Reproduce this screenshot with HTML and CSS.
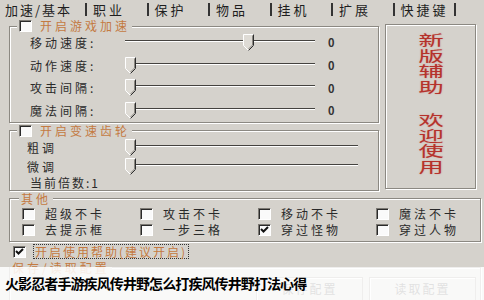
FILE: index.html
```html
<!DOCTYPE html>
<html lang="zh-CN">
<head>
    <meta charset="UTF-8">
    <meta name="viewport" content="width=device-width, initial-scale=1.0">
    <title>辅助设置</title>
    <link rel="stylesheet" href="styles.css">
</head>
<body>
<div class="app">
    <div class="tabs">
        <div class="tab active">加速/基本</div>
        <div class="tab">职业</div>
        <div class="tab">保护</div>
        <div class="tab">物品</div>
        <div class="tab">挂机</div>
        <div class="tab">扩展</div>
        <div class="tab">快捷键</div>
    </div>

    <div class="main">
        <div class="left">
            <fieldset class="group speed">
                <legend><span class="cb"></span><span class="legend-text">开启游戏加速</span></legend>
                <div class="rows">
                    <div class="row">
                        <span class="lbl">移动速度:</span>
                        <div class="slider">
                            <svg class="thumb" style="left:118px" width="11" height="17" viewBox="0 0 11 17"><path d="M0.5 0.5H10.5V11.5L5.5 16.5L0.5 11.5Z" fill="#dedbd5" stroke="#fff"/><path d="M10.5 0.5V11.5L5.5 16.5" fill="none" stroke="#2e2e2e"/><path d="M9.5 1.5V11L5.5 15" fill="none" stroke="#8a8780"/></svg>
                        </div>
                        <span class="val">0</span>
                    </div>
                    <div class="row">
                        <span class="lbl">动作速度:</span>
                        <div class="slider">
                            <svg class="thumb" style="left:0px" width="11" height="17" viewBox="0 0 11 17"><path d="M0.5 0.5H10.5V11.5L5.5 16.5L0.5 11.5Z" fill="#dedbd5" stroke="#fff"/><path d="M10.5 0.5V11.5L5.5 16.5" fill="none" stroke="#2e2e2e"/><path d="M9.5 1.5V11L5.5 15" fill="none" stroke="#8a8780"/></svg>
                        </div>
                        <span class="val">0</span>
                    </div>
                    <div class="row">
                        <span class="lbl">攻击间隔:</span>
                        <div class="slider">
                            <svg class="thumb" style="left:0px" width="11" height="17" viewBox="0 0 11 17"><path d="M0.5 0.5H10.5V11.5L5.5 16.5L0.5 11.5Z" fill="#dedbd5" stroke="#fff"/><path d="M10.5 0.5V11.5L5.5 16.5" fill="none" stroke="#2e2e2e"/><path d="M9.5 1.5V11L5.5 15" fill="none" stroke="#8a8780"/></svg>
                        </div>
                        <span class="val">0</span>
                    </div>
                    <div class="row">
                        <span class="lbl">魔法间隔:</span>
                        <div class="slider">
                            <svg class="thumb" style="left:0px" width="11" height="17" viewBox="0 0 11 17"><path d="M0.5 0.5H10.5V11.5L5.5 16.5L0.5 11.5Z" fill="#dedbd5" stroke="#fff"/><path d="M10.5 0.5V11.5L5.5 16.5" fill="none" stroke="#2e2e2e"/><path d="M9.5 1.5V11L5.5 15" fill="none" stroke="#8a8780"/></svg>
                        </div>
                        <span class="val">0</span>
                    </div>
                </div>
            </fieldset>

            <fieldset class="group gear">
                <legend><span class="cb"></span><span class="legend-text">开启变速齿轮</span></legend>
                <div class="rows">
                    <div class="row">
                        <span class="lbl">粗调</span>
                        <div class="slider wide">
                            <svg class="thumb" style="left:0px" width="11" height="17" viewBox="0 0 11 17"><path d="M0.5 0.5H10.5V11.5L5.5 16.5L0.5 11.5Z" fill="#dedbd5" stroke="#fff"/><path d="M10.5 0.5V11.5L5.5 16.5" fill="none" stroke="#2e2e2e"/><path d="M9.5 1.5V11L5.5 15" fill="none" stroke="#8a8780"/></svg>
                        </div>
                    </div>
                    <div class="row">
                        <span class="lbl">微调</span>
                        <div class="slider wide">
                            <svg class="thumb" style="left:0px" width="11" height="17" viewBox="0 0 11 17"><path d="M0.5 0.5H10.5V11.5L5.5 16.5L0.5 11.5Z" fill="#dedbd5" stroke="#fff"/><path d="M10.5 0.5V11.5L5.5 16.5" fill="none" stroke="#2e2e2e"/><path d="M9.5 1.5V11L5.5 15" fill="none" stroke="#8a8780"/></svg>
                        </div>
                    </div>
                    <div class="row short">
                        <span class="ratio">当前倍数:1</span>
                    </div>
                </div>
            </fieldset>
        </div>

        <div class="banner">
            <div class="banner-text">新<br>版<br>辅<br>助</div>
            <div class="banner-text">欢<br>迎<br>使<br>用</div>
        </div>
    </div>

    <fieldset class="group other">
        <legend><span class="legend-text">其他</span></legend>
        <div class="opts">
            <div class="opt"><span class="cb"></span>超级不卡</div>
            <div class="opt"><span class="cb"></span>攻击不卡</div>
            <div class="opt"><span class="cb"></span>移动不卡</div>
            <div class="opt"><span class="cb"></span>魔法不卡</div>
            <div class="opt"><span class="cb"></span>去提示框</div>
            <div class="opt"><span class="cb"></span>一步三格</div>
            <div class="opt"><span class="cb checked"><svg width="9" height="9" viewBox="0 0 9 9"><path d="M1 4L3.5 6.5L8 2" fill="none" stroke="#111" stroke-width="2"/></svg></span>穿过怪物</div>
            <div class="opt"><span class="cb"></span>穿过人物</div>
        </div>
    </fieldset>

    <div class="help">
        <span class="cb checked"><svg width="9" height="9" viewBox="0 0 9 9"><path d="M1 4L3.5 6.5L8 2" fill="none" stroke="#111" stroke-width="2"/></svg></span>
        <span class="help-text">开启使用帮助(建议开启)</span>
    </div>

    <fieldset class="group save">
        <legend><span class="legend-text">保存/读取配置</span></legend>
        <div class="buttons">
            <div class="btn">保存配置</div>
            <div class="btn">读取配置</div>
        </div>
    </fieldset>

    <div class="caption">火影忍者手游疾风传井野怎么打疾风传井野打法心得</div>
</div>
</body>
</html>
```

FILE: styles.css
```css
body {
    margin: 0;
    background-color: #d5d2cc;
    font-family: "Noto Sans CJK SC", sans-serif;
    font-size: 12px;
    color: #2a2a2a;
}
.app {
    position: relative;
    width: 484px;
    height: 300px;
    overflow: hidden;
}

/* tabs */
.tabs {
    display: flex;
    height: 18px;
    align-items: center;
    font-size: 13px;
    letter-spacing: 3px;
    color: #1e1e1e;
}
.tab {
    width: 61.5px;
    height: 13px;
    line-height: 13px;
    padding-left: 6px;
    box-sizing: border-box;
    border-right: 2px solid #333;
    white-space: nowrap;
}
.tab.active {
    width: 87px;
    padding-left: 5px;
    letter-spacing: 2px;
}

/* layout */
.main {
    display: flex;
    padding-left: 9px;
    margin-top: 1px;
}
.left {
    display: flex;
    flex-direction: column;
    width: 370px;
}

/* group boxes */
.group {
    margin: 0;
    padding: 0;
    border: 1px solid #8c8982;
    box-shadow: inset 1px 1px 0 #fff, 1px 1px 0 #fff;
    min-width: 0;
}
.group legend {
    display: flex;
    align-items: center;
    height: 14px;
    padding: 0 2px;
    margin-left: 7px;
    background-color: #d5d2cc;
}
.legend-text {
    color: #c47a42;
    letter-spacing: 3px;
    line-height: 14px;
    margin-left: 8px;
}
.other legend .legend-text,
.save legend .legend-text {
    margin-left: 0;
}

.rows {
    padding-left: 20px;
    margin-top: -2px;
}
.row {
    display: flex;
    align-items: center;
    height: 22.7px;
}
.lbl {
    width: 95px;
    letter-spacing: 3px;
}
.gear {
    margin-top: 1px;
}
.gear .rows {
    padding-left: 17px;
    margin-top: 0;
}
.gear .row {
    height: 19px;
}
.gear .lbl {
    width: 98px;
}
.gear .row.short {
    height: 14px;
}
.ratio {
    margin-left: 3px;
    letter-spacing: 2px;
}

/* slider */
.slider {
    position: relative;
    width: 190px;
    height: 17px;
}
.slider.wide {
    width: 233px;
}
.slider::before {
    content: "";
    position: absolute;
    left: 0;
    right: 0;
    top: 6px;
    height: 1px;
    background-color: #45433f;
    box-shadow: 0 1px 0 #fff;
}
.thumb {
    position: absolute;
    top: 0;
}
.val {
    margin-left: 13px;
    font-size: 11px;
    font-weight: bold;
    color: #333;
}

/* banner */
.banner {
    width: 91px;
    height: 165px;
    margin-top: 5px;
    margin-left: 6px;
    box-sizing: border-box;
    border: 1px solid #8c8982;
    box-shadow: inset 1px 1px 0 #fff, 1px 1px 0 #fff;
    display: flex;
    flex-direction: column;
    align-items: center;
    padding-top: 7px;
    gap: 18px;
}
.banner-text {
    font-size: 14px;
    line-height: 15.5px;
    color: #b5322c;
    text-align: center;
    transform: scaleX(1.8);
    text-shadow: 0 0 1px rgba(200, 60, 50, 0.5);
}

/* other options */
.other {
    margin: 1px 3px 0 9px;
}
.other legend {
    margin-left: 9px;
}
.opts {
    display: grid;
    grid-template-columns: repeat(4, 118px);
    grid-auto-rows: 16px;
    padding: 0 0 3px 12px;
}
.opt {
    display: flex;
    align-items: center;
    gap: 10px;
    letter-spacing: 3px;
}
.cb {
    display: inline-flex;
    align-items: center;
    justify-content: center;
    width: 13px;
    height: 12px;
    box-sizing: border-box;
    background-color: #fafafa;
    border: 1px solid;
    border-color: #7d7a74 #fff #fff #7d7a74;
    box-shadow: inset 1px 1px 0 #2a2a2a;
    flex: none;
}

/* help */
.help {
    display: flex;
    align-items: center;
    height: 16px;
    margin-top: 2px;
    padding-left: 13px;
    gap: 7px;
}
.help-text {
    color: #c47a42;
    letter-spacing: 2px;
    line-height: 13px;
    border: 1px dotted #333;
    padding: 0 1px 0 1px;
}

/* save */
.save {
    margin: 1px 3px 0 9px;
    height: 44px;
}
.save legend {
    margin-left: 0;
}
.buttons {
    display: flex;
    justify-content: flex-end;
    gap: 6px;
    padding: 2px 4px 0 0;
}
.btn {
    width: 105px;
    height: 22px;
    line-height: 22px;
    text-align: center;
    letter-spacing: 2px;
    border: 1px solid #8c8982;
    box-shadow: inset 1px 1px 0 #fff;
}

/* caption overlay */
.caption {
    position: absolute;
    left: 0;
    right: 0;
    top: 267px;
    bottom: 0;
    padding-left: 5px;
    background-color: rgba(255, 255, 255, 0.86);
    color: #000;
    font-size: 14px;
    font-weight: bold;
    letter-spacing: -0.9px;
    line-height: 32px;
}
```
